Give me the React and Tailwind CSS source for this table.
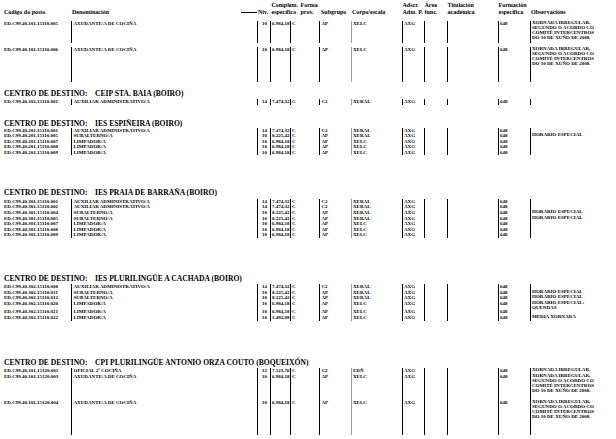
const line = "border-l border-black";

const cell = {
  code: "w-[71px] shrink-0 pl-[4px] whitespace-nowrap",
  den: `w-[186px] shrink-0 ${line} pl-[1.5px] whitespace-nowrap`,
  niv: `w-[13px] shrink-0 ${line} pl-[4px]`,
  comp: `w-[20px] shrink-0 ${line} text-right pr-[0.5px] whitespace-nowrap`,
  forma: `w-[29px] shrink-0 ${line} pl-[1px]`,
  sub: `w-[32px] shrink-0 ${line} pl-[1.5px]`,
  corpo: "w-[51px] shrink-0 border-l border-[#9c9c9c] pl-[1px]",
  adscr: `w-[22px] shrink-0 ${line} pl-[1px]`,
  area: `w-[23px] shrink-0 ${line}`,
  tit: `w-[51px] shrink-0 ${line}`,
  form: `w-[32px] shrink-0 ${line} pl-[1px]`,
  obs: `flex-1 ${line} pl-[1px] leading-[4.9px] whitespace-nowrap`,
};

const xornada = [
  "XORNADA IRREGULAR,",
  "SEGUNDO O ACORDO CO",
  "COMITÉ INTERCENTROS",
  "DO 10 DE XUÑO DE 2008.",
];

const aux = { den: "AUXILIAR ADMINISTRATIVO/A", niv: "14", comp: "7.474,32", sub: "C2", corpo: "XERAL" };
const sub = { den: "SUBALTERNO/A", niv: "10", comp: "8.225,42", sub: "AP", corpo: "XERAL" };
const lim = { den: "LIMPADOR/A", niv: "10", comp: "6.984,18", sub: "AP", corpo: "XELC" };
const cocina = { den: "AXUDANTE/A DE COCIÑA", niv: "10", comp: "6.984,18", sub: "AP", corpo: "XELC", obs: xornada };

const sections = [
  {
    title: null,
    wrap: "",
    rows: [
      { code: "ED.C99.40.101.15110.005", ...cocina, h: "h-[22px]" },
      { spacer: true, h: "h-[4px]" },
      { code: "ED.C99.40.101.15110.006", ...cocina, h: "h-[35px]" },
    ],
  },
  {
    title: "CEIP STA. BAIA (BOIRO)",
    head: "mt-[6.5px]",
    wrap: "mt-[1px]",
    rows: [{ code: "ED.C99.40.102.15110.001", ...aux, h: "h-[6px]" }],
  },
  {
    title: "IES ESPIÑEIRA (BOIRO)",
    head: "mt-[14px]",
    wrap: "pb-[2px]",
    rows: [
      { code: "ED.C99.40.201.15110.001", ...aux },
      { code: "ED.C99.40.201.15110.005", ...sub, obs: ["HORARIO ESPECIAL"] },
      { code: "ED.C99.40.201.15110.007", ...lim },
      { code: "ED.C99.40.201.15110.008", ...lim },
      { code: "ED.C99.40.201.15110.009", ...lim },
    ],
  },
  {
    title: "IES PRAIA DE BARRAÑA (BOIRO)",
    head: "mt-[31px]",
    wrap: "mt-[1.4px] pb-[2px]",
    rows: [
      { code: "ED.C99.40.301.15110.001", ...aux },
      { code: "ED.C99.40.301.15110.002", ...aux },
      { code: "ED.C99.40.301.15110.004", ...sub, obs: ["HORARIO ESPECIAL"] },
      { code: "ED.C99.40.301.15110.005", ...sub, obs: ["HORARIO ESPECIAL"] },
      { code: "ED.C99.40.301.15110.007", ...lim },
      { code: "ED.C99.40.301.15110.008", ...lim },
      { code: "ED.C99.40.301.15110.009", ...lim },
    ],
  },
  {
    title: "IES PLURILINGÜE A CACHADA (BOIRO)",
    head: "mt-[34.4px]",
    wrap: "mt-[0.7px] pb-[2px]",
    rows: [
      { code: "ED.C99.40.302.15110.008", ...aux },
      { code: "ED.C99.40.302.15110.011", ...sub, obs: ["HORARIO ESPECIAL"] },
      { code: "ED.C99.40.302.15110.012", ...sub, obs: ["HORARIO ESPECIAL"] },
      { code: "ED.C99.40.302.15110.020", ...lim, obs: ["HORARIO ESPECIAL:", "QUENDAS"], h: "h-[8.6px]" },
      { code: "ED.C99.40.302.15110.021", ...lim, h: "h-[6px]" },
      { code: "ED.C99.40.302.15110.022", ...lim, comp: "3.492,09", obs: ["MEDIA XORNADA"] },
    ],
  },
  {
    title: "CPI PLURILINGÜE ANTONIO ORZA COUTO (BOQUEIXÓN)",
    head: "mt-[35.3px]",
    wrap: "mt-[0.7px]",
    rows: [
      {
        code: "ED.C99.40.101.15120.001",
        den: "OFICIAL 2ª COCIÑA",
        niv: "12",
        comp: "7.123,76",
        sub: "C2",
        corpo: "EDÑ",
        obs: ["XORNADA IRREGULAR."],
        h: "h-[6px]",
      },
      { code: "ED.C99.40.101.15120.003", ...cocina, h: "h-[26px]" },
      { code: "ED.C99.40.101.15120.004", ...cocina, h: "h-[35px]" },
    ],
  },
];

function Row({ r }) {
  if (r.spacer) return <div className={r.h} />;
  return (
    <div className={`flex leading-[5.6px] ${r.h || "h-[5.6px]"}`}>
      <div className={cell.code}>{r.code}</div>
      <div className={cell.den}>{r.den}</div>
      <div className={cell.niv}>{r.niv}</div>
      <div className={cell.comp}>{r.comp}</div>
      <div className={cell.forma}>C</div>
      <div className={cell.sub}>{r.sub}</div>
      <div className={cell.corpo}>{r.corpo}</div>
      <div className={cell.adscr}>AXG</div>
      <div className={cell.area}></div>
      <div className={cell.tit}></div>
      <div className={cell.form}>648</div>
      <div className={cell.obs}>
        {(r.obs || []).map((t) => (
          <div key={t} className="h-[4.9px]">{t}</div>
        ))}
      </div>
    </div>
  );
}

function Header() {
  return (
    <div className="flex h-[21px] pt-[1.5px] text-[6px] leading-[7px] whitespace-nowrap">
      <div className="w-[71px] shrink-0 pl-[4px]">
        <div>&nbsp;</div>
        <div>Código do posto</div>
      </div>
      <div className="w-[186px] shrink-0 pl-[1px]">
        <div>&nbsp;</div>
        <div className="flex">
          <span>Denominación</span>
          <span className="ml-auto mt-[3px] h-px w-[16px] bg-black" />
        </div>
      </div>
      <div className="w-[13px] shrink-0 pl-[1px]">
        <div>&nbsp;</div>
        <div>Niv.</div>
      </div>
      <div className="w-[20px] shrink-0 pl-[1.5px]">
        <div>Complem.</div>
        <div>específico</div>
      </div>
      <div className="w-[29px] shrink-0 pl-[10.5px]">
        <div>Forma</div>
        <div>prov.</div>
      </div>
      <div className="w-[32px] shrink-0 pl-[2px]">
        <div>&nbsp;</div>
        <div>Subgrupo</div>
      </div>
      <div className="w-[51px] shrink-0 pl-[1px]">
        <div>&nbsp;</div>
        <div>Corpo/escala</div>
      </div>
      <div className="w-[22px] shrink-0 pl-[0.5px]">
        <div>Adscr.</div>
        <div>Adm. P.</div>
      </div>
      <div className="w-[23px] shrink-0 pl-[0.5px]">
        <div>Área</div>
        <div>func.</div>
      </div>
      <div className="w-[51px] shrink-0 pl-[0.5px]">
        <div>Titulación</div>
        <div>académica</div>
      </div>
      <div className="w-[32px] shrink-0 pl-[0.5px]">
        <div>Formación</div>
        <div>específica</div>
      </div>
      <div className="flex-1 pl-[1px]">
        <div>&nbsp;</div>
        <div>Observacións</div>
      </div>
    </div>
  );
}

export default function App() {
  return (
    <div className="w-[616px] h-[439px] overflow-hidden bg-white text-black font-bold [font-family:'Liberation_Serif','Times_New_Roman',serif]">
      <Header />
      {sections.map((s, i) => (
        <div key={i}>
          {s.title && (
            <div className={`${s.head} h-[9px] pl-[4px] text-[7.6px] leading-[9px] whitespace-nowrap`}>
              <span>CENTRO DE DESTINO:</span>
              <span className="ml-[7.5px]">{s.title}</span>
            </div>
          )}
          <div className={`${s.wrap} text-[5px]`}>
            {s.rows.map((r, j) => (
              <Row key={j} r={r} />
            ))}
          </div>
        </div>
      ))}
    </div>
  );
}
